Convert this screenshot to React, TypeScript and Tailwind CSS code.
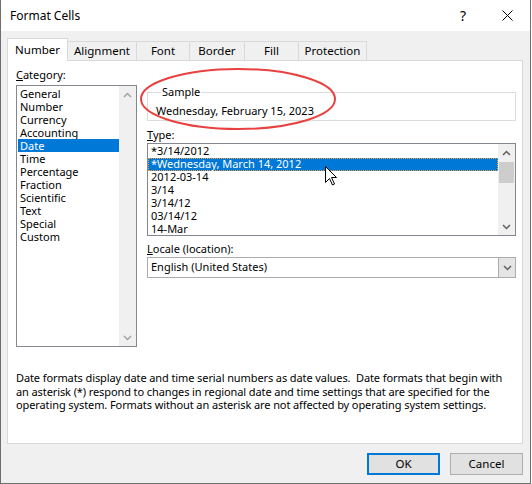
import React from 'react';

const categories = [
  'General',
  'Number',
  'Currency',
  'Accounting',
  'Date',
  'Time',
  'Percentage',
  'Fraction',
  'Scientific',
  'Text',
  'Special',
  'Custom',
];

const types = [
  '*3/14/2012',
  '*Wednesday, March 14, 2012',
  '2012-03-14',
  '3/14',
  '3/14/12',
  '03/14/12',
  '14-Mar',
];

const tabs = [
  { label: 'Alignment', w: 'w-[69px]' },
  { label: 'Font', w: 'w-[53px]' },
  { label: 'Border', w: 'w-[55px]' },
  { label: 'Fill', w: 'w-[54px]' },
  { label: 'Protection', w: 'w-[68px]' },
];

function Chevron({ up, color }: { up?: boolean; color: string }) {
  return (
    <svg width="9" height="6" viewBox="0 0 9 6" fill="none">
      <path
        d={up ? 'M1 5L4.5 1.5L8 5' : 'M1 1L4.5 4.5L8 1'}
        stroke={color}
        strokeWidth="1.5"
      />
    </svg>
  );
}

function ScrollBar({ dim, thumb }: { dim?: boolean; thumb?: boolean }) {
  const c = dim ? '#a3a3a3' : '#606060';
  return (
    <div className="w-[17px] h-full bg-[#f0f0f0] flex flex-col shrink-0">
      <div className="h-[17px] flex items-center justify-center">
        <Chevron up color={c} />
      </div>
      <div className="flex-1">
        {thumb && <div className="mx-px mt-[1px] h-[21px] bg-[#cdcdcd]" />}
      </div>
      <div className="h-[17px] flex items-center justify-center">
        <Chevron color={c} />
      </div>
    </div>
  );
}

export default function App() {
  return (
    <div
      className="w-[532px] h-[484px] bg-white text-[11px] text-black"
      style={{ fontFamily: '"Noto Sans", "Liberation Sans", sans-serif' }}
    >
      <div className="w-[531px] h-[484px] border-x border-b border-[#6e6e6e] flex flex-col">
        {/* title bar */}
        <div className="h-[31px] bg-white flex items-center pl-[9px] pr-[17px] shrink-0">
          <span className="flex-1 text-[12px]">Format Cells</span>
          <span className="text-[14px] mr-[36px] leading-none">?</span>
          <svg width="11" height="11" viewBox="0 0 11 11">
            <path d="M0.5 0.5L10.5 10.5M10.5 0.5L0.5 10.5" stroke="#000" strokeWidth="1" />
          </svg>
        </div>

        {/* body */}
        <div className="flex-1 bg-[#f0f0f0] pl-[6px] pr-[6px] pt-[7px]">
          {/* tabs */}
          <div className="flex items-end h-[22px]">
            <div className="w-[61px] h-[23px] bg-white border border-b-0 border-[#d9d9d9] flex items-center justify-center relative z-10 -mb-px text-[11.5px]">
              Number
            </div>
            {tabs.map((t) => (
              <div
                key={t.label}
                className={`${t.w} h-[19px] border border-l-0 border-b-0 border-[#d9d9d9] flex items-center justify-center text-[11.5px]`}
              >
                {t.label}
              </div>
            ))}
          </div>

          {/* panel */}
          <div className="relative w-[516px] h-[384px] bg-white border border-[#d9d9d9] pl-[8px] pr-[6px] pt-[6px]">
            <div className="flex gap-[10px]">
              {/* category column */}
              <div className="w-[121px] flex flex-col">
                <div className="h-[16px] leading-[16px]">
                  <span className="underline">C</span>ategory:
                </div>
                <div className="mt-[2px] h-[262px] border border-[#828790] flex pl-px pt-[1px] pb-0">
                  <div className="flex-1 flex flex-col">
                    {categories.map((c) => (
                      <div
                        key={c}
                        className={`h-[13px] leading-[13px] pl-[2px] ${
                          c === 'Date' ? 'bg-[#0078d7] text-white' : ''
                        }`}
                      >
                        {c}
                      </div>
                    ))}
                  </div>
                  <div className="-mt-[1px]">
                    <ScrollBar dim />
                  </div>
                </div>
              </div>

              {/* right column */}
              <div className="w-[369px] flex flex-col">
                <fieldset className="mt-[17px] border border-[#dcdcdc] pl-[8px] pb-[1px]">
                  <legend className="ml-[5px] px-px h-[16px] leading-[16px]">Sample</legend>
                  <div className="h-[16px] leading-[16px] mt-[3px]">Wednesday, February 15, 2023</div>
                </fieldset>

                <div className="mt-[6px] h-[16px] leading-[16px]">
                  <span className="underline">T</span>ype:
                </div>
                <div className="h-[93px] border border-[#828790] flex overflow-hidden">
                  <div className="flex-1 flex flex-col pt-px">
                    {types.map((t, i) => (
                      <div
                        key={t}
                        className={`h-[13px] leading-[12px] px-[3px] shrink-0 ${
                          i === 1
                            ? 'bg-[#0078d7] text-white outline outline-1 outline-dotted outline-[#f0a040] -outline-offset-1'
                            : ''
                        }`}
                      >
                        {t}
                      </div>
                    ))}
                  </div>
                  <ScrollBar thumb />
                </div>

                <div className="mt-[5px] h-[16px] leading-[16px]">
                  <span className="underline">L</span>ocale (location):
                </div>
                <div className="h-[21px] border border-[#acacac] flex items-center">
                  <span className="flex-1 pl-[3px]">English (United States)</span>
                  <div className="w-[17px] h-full bg-[#e5e5e5] border-l border-[#acacac] flex items-center justify-center">
                    <Chevron color="#606060" />
                  </div>
                </div>
              </div>
            </div>

            {/* description */}
            <p className="mt-[24px] leading-[13.6px] tracking-[-0.1px]">
              Date formats display date and time serial numbers as date values.&nbsp; Date formats that begin with
              <br />
              an asterisk (*) respond to changes in regional date and time settings that are specified for the
              <br />
              operating system. Formats without an asterisk are not affected by operating system settings.
            </p>

            {/* annotation ellipse */}
            <svg
              className="absolute left-[125px] top-[0px] pointer-events-none"
              width="210"
              height="75"
              viewBox="0 0 210 75"
            >
              <ellipse cx="105" cy="38" rx="97" ry="30" fill="none" stroke="#e8413f" strokeWidth="2" />
            </svg>

            {/* mouse cursor */}
            <svg
              className="absolute left-[317px] top-[105px] pointer-events-none"
              width="13"
              height="20"
              viewBox="0 0 13 20"
            >
              <path
                d="M0.5 0.5V16.5L4.5 12.5L7.5 19L9.5 18L6.5 11.5H11.5Z"
                fill="#fff"
                stroke="#000"
                strokeWidth="1"
                strokeLinejoin="round"
              />
            </svg>
          </div>

          {/* buttons */}
          <div className="flex justify-end gap-[10px] mt-[9px] pr-px">
            <button className="w-[73px] h-[22px] bg-[#e1e1e1] border-2 border-[#0078d7] text-[11.5px]">OK</button>
            <button className="w-[73px] h-[22px] bg-[#e1e1e1] border border-[#adadad] text-[11.5px]">Cancel</button>
          </div>
        </div>
      </div>
    </div>
  );
}
